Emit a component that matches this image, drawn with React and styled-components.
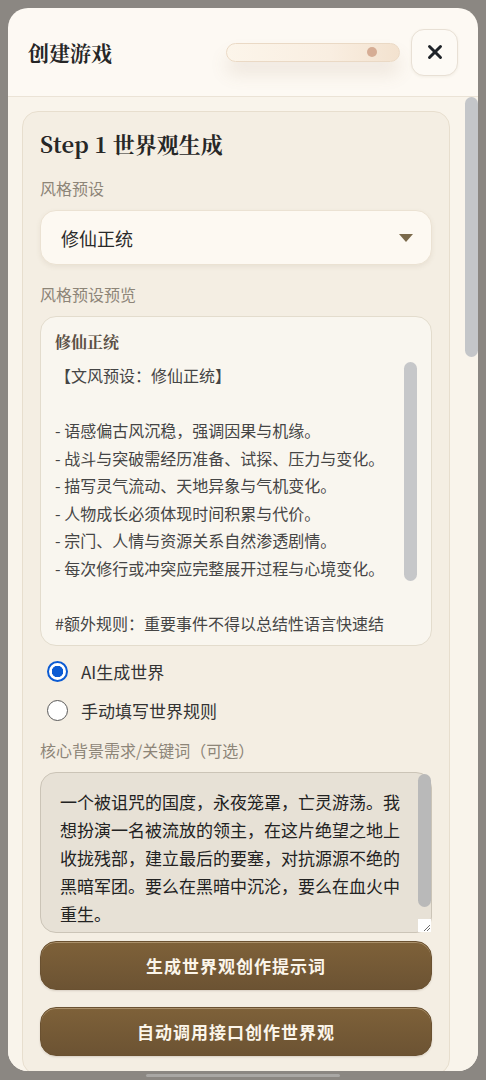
import styled, { createGlobalStyle } from "styled-components";
import { X } from "lucide-react";

const SANS = `"Noto Sans CJK SC", "Noto Sans", sans-serif`;
const SERIF = `"Noto Serif CJK SC", "Liberation Serif", "Noto Sans CJK SC", serif`;

const PRESET_TEXT = `【文风预设：修仙正统】

- 语感偏古风沉稳，强调因果与机缘。
- 战斗与突破需经历准备、试探、压力与变化。
- 描写灵气流动、天地异象与气机变化。
- 人物成长必须体现时间积累与代价。
- 宗门、人情与资源关系自然渗透剧情。
- 每次修行或冲突应完整展开过程与心境变化。

#额外规则：重要事件不得以总结性语言快速结束，必须写出过程、细节与人物的真实反应。`;

const WORLD_PROMPT =
  "一个被诅咒的国度，永夜笼罩，亡灵游荡。我想扮演一名被流放的领主，在这片绝望之地上收拢残部，建立最后的要塞，对抗源源不绝的黑暗军团。要么在黑暗中沉沦，要么在血火中重生。";

const GlobalStyle = createGlobalStyle`
  html, body {
    margin: 0;
    height: 100%;
  }
  body {
    background: #8b8782;
    font-family: ${SANS};
    color: #2b2b2b;
  }
  * {
    box-sizing: border-box;
  }
`;

const Overlay = styled.div`
  height: 100vh;
  padding: 8px 8px 0;
  display: flex;
  flex-direction: column;
`;

const Modal = styled.div`
  flex: 1;
  min-height: 0;
  display: flex;
  flex-direction: column;
  background: #fdf9f3;
  border-radius: 20px;
  overflow: hidden;
`;

const Header = styled.header`
  height: 89px;
  flex-shrink: 0;
  display: flex;
  align-items: center;
  padding: 0 20px;
  border-bottom: 1px solid #ebe3d6;
`;

const Title = styled.h1`
  margin: 0;
  font-family: ${SERIF};
  font-size: 21px;
  font-weight: 700;
  color: #262626;
`;

const Track = styled.div`
  margin-left: auto;
  width: 174px;
  height: 19px;
  display: flex;
  align-items: center;
  justify-content: flex-end;
  padding-right: 22px;
  border-radius: 10px;
  border: 1px solid #ead9c5;
  background: linear-gradient(90deg, #fcf5ea 0%, #f9eee1 60%, #f3e2cf 100%);
  box-shadow: 0 12px 18px rgba(140, 110, 80, 0.13);
`;

const Knob = styled.span`
  width: 10px;
  height: 10px;
  border-radius: 50%;
  background: #d6ad95;
`;

const CloseButton = styled.button`
  margin-left: 11px;
  width: 47px;
  height: 47px;
  display: flex;
  align-items: center;
  justify-content: center;
  border-radius: 13px;
  border: 1px solid #e8e0d5;
  background: #fdfaf5;
  color: #1f2328;
  box-shadow: 0 1px 3px rgba(120, 100, 70, 0.08);
  padding: 0;
`;

/* scroll area: content column plus a drawn scroll rail */
const Body = styled.div`
  flex: 1;
  min-height: 0;
  display: flex;
  background: #f9f4eb;
`;

const BodyContent = styled.div`
  flex: 1;
  min-width: 0;
  overflow: hidden;
  padding: 14px 14px 0;
`;

const Rail = styled.div`
  width: ${(p) => p.$width}px;
  flex-shrink: 0;
  display: flex;
  flex-direction: column;
  padding-left: ${(p) => p.$inset || 0}px;
`;

const Thumb = styled.div`
  height: ${(p) => p.$length}px;
  margin-top: ${(p) => p.$offset || 0}px;
  border-radius: 7px;
  background: ${(p) => p.$color};
`;

const StepCard = styled.section`
  background: #f4eee3;
  border: 1px solid #e7dece;
  border-radius: 16px;
  padding: 17px 17px 18px;
  display: flex;
  flex-direction: column;
`;

const StepTitle = styled.h2`
  margin: 0;
  font-family: ${SERIF};
  font-size: 22px;
  line-height: 30px;
  font-weight: 700;
  color: #272727;
`;

const Label = styled.div`
  margin: ${(p) => p.$top ?? 18}px 0 11px;
  font-size: 16px;
  line-height: 22px;
  color: #8d8578;
`;

const SelectBox = styled.div`
  height: 55px;
  display: flex;
  align-items: center;
  justify-content: space-between;
  padding: 0 18px 0 20px;
  border-radius: 16px;
  border: 1px solid #ebe2d3;
  background: #fdf9f2;
  box-shadow: 0 2px 5px rgba(120, 100, 70, 0.09);
  font-size: 18px;
  color: #2a2a2a;
`;

const Preview = styled.div`
  height: 330px;
  display: flex;
  flex-direction: column;
  padding: 14px 14px 7px;
  border-radius: 16px;
  border: 1px solid #e3dccd;
  background: #f9f6ef;
`;

const PreviewTitle = styled.div`
  font-family: ${SERIF};
  font-size: 16px;
  line-height: 22px;
  font-weight: 700;
  color: #5b5045;
  margin-bottom: 9px;
`;

const PreviewPane = styled.div`
  flex: 1;
  min-height: 0;
  display: flex;
`;

const PreviewText = styled.div`
  flex: 1;
  min-width: 0;
  overflow: hidden;
  white-space: pre-wrap;
  padding-right: 10px;
  font-size: 16px;
  line-height: 27.5px;
  color: #454545;
`;

const Choices = styled.div`
  margin-top: 10px;
  padding-left: 7px;
  display: flex;
  flex-direction: column;
  gap: 9px;
`;

const Choice = styled.label`
  height: 30px;
  display: flex;
  align-items: center;
  gap: 13px;
  font-size: 17px;
  color: #333;
`;

const Radio = styled.input.attrs({ type: "radio" })`
  appearance: none;
  margin: 0;
  width: 21px;
  height: 21px;
  border-radius: 50%;
  border: 1.5px solid #5a5a5a;
  background: #fff;

  &:checked {
    border: 2px solid #0b5bd3;
    background: radial-gradient(circle, #0b5bd3 0 5.5px, #fff 6px);
  }
`;

const PromptBox = styled.div`
  height: 161px;
  display: flex;
  border-radius: 16px;
  border: 1px solid #cbc4b7;
  background: #e7e1d6;
`;

const PromptInput = styled.textarea`
  flex: 1;
  min-width: 0;
  margin: 0;
  padding: 15px 16px 0 19px;
  border: 0;
  border-radius: 16px 0 0 16px;
  background: transparent;
  font-family: ${SANS};
  font-size: 17px;
  line-height: 28px;
  color: #222;
  resize: none;
  outline: none;
  overflow: hidden;
`;

const PromptRail = styled(Rail)`
  justify-content: space-between;
`;

const Resizer = styled.div`
  width: 13px;
  height: 13px;
  display: flex;
  align-items: flex-end;
  justify-content: flex-end;
  background: #fff;
`;

const Actions = styled.div`
  margin-top: 8px;
  display: flex;
  flex-direction: column;
  gap: 17px;
`;

const ActionButton = styled.button`
  height: 49px;
  border-radius: 16px;
  border: 1px solid #6a5131;
  background: linear-gradient(180deg, #7e6139 0%, #6c5333 100%);
  box-shadow: inset 0 1px 0 rgba(255, 236, 200, 0.35), 0 1px 2px rgba(60, 40, 20, 0.15);
  font-family: ${SANS};
  font-size: 17px;
  font-weight: 700;
  letter-spacing: 1px;
  color: #fbf5ea;
`;

const HomeArea = styled.div`
  height: 9px;
  flex-shrink: 0;
  display: flex;
  align-items: center;
  justify-content: center;
`;

const HomeBar = styled.span`
  width: 194px;
  height: 3px;
  border-radius: 2px;
  background: #a9a7a4;
`;

function Caret() {
  return (
    <svg width="14" height="8" viewBox="0 0 14 8">
      <path d="M0 0h14L7 8z" fill="#7b6a4b" />
    </svg>
  );
}

function ResizeGrip() {
  return (
    <svg width="10" height="10" viewBox="0 0 10 10">
      <path d="M9 3L3 9M9 6L6 9" stroke="#6d6d6d" strokeWidth="1" fill="none" />
    </svg>
  );
}

export default function App() {
  return (
    <>
      <GlobalStyle />
      <Overlay>
        <Modal>
          <Header>
            <Title>创建游戏</Title>
            <Track>
              <Knob />
            </Track>
            <CloseButton aria-label="关闭">
              <X size={22} strokeWidth={3.2} />
            </CloseButton>
          </Header>

          <Body>
            <BodyContent>
              <StepCard>
                <StepTitle>Step 1 世界观生成</StepTitle>

                <Label>风格预设</Label>
                <SelectBox>
                  <span>修仙正统</span>
                  <Caret />
                </SelectBox>

                <Label>风格预设预览</Label>
                <Preview>
                  <PreviewTitle>修仙正统</PreviewTitle>
                  <PreviewPane>
                    <PreviewText>{PRESET_TEXT}</PreviewText>
                    <Rail $width={13}>
                      <Thumb $length={219} $color="#c6c7c9" />
                    </Rail>
                  </PreviewPane>
                </Preview>

                <Choices>
                  <Choice>
                    <Radio name="mode" defaultChecked />
                    AI生成世界
                  </Choice>
                  <Choice>
                    <Radio name="mode" />
                    手动填写世界规则
                  </Choice>
                </Choices>

                <Label $top={14}>核心背景需求/关键词（可选）</Label>
                <PromptBox>
                  <PromptInput defaultValue={WORLD_PROMPT} />
                  <PromptRail $width={13}>
                    <Thumb $length={133} $offset={1} $color="#b9b9b9" />
                    <Resizer>
                      <ResizeGrip />
                    </Resizer>
                  </PromptRail>
                </PromptBox>

                <Actions>
                  <ActionButton>生成世界观创作提示词</ActionButton>
                  <ActionButton>自动调用接口创作世界观</ActionButton>
                </Actions>
              </StepCard>
            </BodyContent>
            <Rail $width={14} $inset={1}>
              <Thumb $length={260} $color="#c4c6c9" />
            </Rail>
          </Body>
        </Modal>
        <HomeArea>
          <HomeBar />
        </HomeArea>
      </Overlay>
    </>
  );
}
